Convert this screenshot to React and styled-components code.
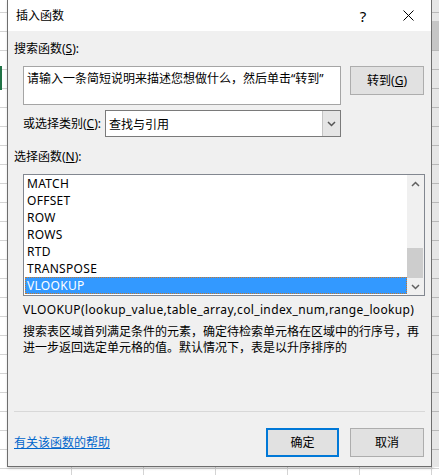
import React from 'react';
import styled, { createGlobalStyle } from 'styled-components';

const GlobalStyle = createGlobalStyle`
  html, body {
    margin: 0;
    padding: 0;
  }
  body {
    width: 439px;
    height: 475px;
    overflow: hidden;
    background-color: #ffffff;
    background-image:
      linear-gradient(to bottom, transparent 18px, #d4d4d4 18px),
      linear-gradient(to right, transparent 71px, #d4d4d4 71px);
    background-size: 100% 19px, 72px 100%;
    background-position: 0 13px, 0 0;
    font-family: "Noto Sans", "Noto Sans CJK SC", sans-serif;
    font-size: 12px;
    color: #000;
  }
`;

const Page = styled.div`
  display: flex;
  height: 467px;
`;

// Excel sheet peeking out at the left edge, with the green cell cursor
const LeftGutter = styled.div`
  width: 7px;
  flex-shrink: 0;
  background: linear-gradient(#217346, #217346) 0 66px / 2px 24px no-repeat;
`;

const RightGutter = styled.div`
  flex: 1;
  background-color: #e6e6e6;
  background-image:
    linear-gradient(#c6c6c6, #c6c6c6),
    linear-gradient(to bottom, transparent 18px, #b8b8b8 18px);
  background-size: 100% 29px, 100% 19px;
  background-position: 0 21px, 0 13px;
  background-repeat: no-repeat, repeat;
`;

const Dialog = styled.div`
  width: 425px;
  height: 467px;
  box-sizing: border-box;
  display: flex;
  flex-direction: column;
  background: #f0f0f0;
  border: 1px solid #6e6e6e;
  border-top: none;
  box-shadow: 1px 1px 3px rgba(0, 0, 0, 0.25);
`;

const TitleBar = styled.div`
  height: 31px;
  display: flex;
  align-items: center;
  background: #ffffff;
  padding-left: 8px;
`;

const Title = styled.div`
  flex: 1;
  font-size: 12px;
  line-height: 17px;
`;

const TitleButton = styled.div`
  width: ${(p) => p.$w}px;
  height: 31px;
  display: flex;
  align-items: center;
  justify-content: center;
  font-size: 15px;
`;

const Body = styled.div`
  flex: 1;
  display: flex;
  flex-direction: column;
`;

const Label = styled.div`
  margin: ${(p) => p.$mt}px 0 0 6px;
  line-height: 17px;
  height: 17px;
`;

const Key = styled.span`
  text-decoration: underline;
`;

const SearchRow = styled.div`
  display: flex;
  align-items: flex-start;
  gap: 9px;
  margin: 9px 0 0 15px;
`;

const SearchBox = styled.div`
  width: 318px;
  height: 39px;
  box-sizing: border-box;
  background: #fff;
  border: 1px solid #a5a5a5;
  padding: 3px 3px;
  line-height: 17px;
`;

const Button = styled.div`
  width: ${(p) => p.$w}px;
  height: 29px;
  box-sizing: border-box;
  display: flex;
  align-items: center;
  justify-content: center;
  background: #e1e1e1;
  border: ${(p) => (p.$default ? '2px solid #0078d7' : '1px solid #adadad')};
  line-height: 17px;
`;

const CategoryRow = styled.div`
  display: flex;
  align-items: center;
  margin: 5px 0 0 15px;
`;

const CategoryLabel = styled.div`
  width: 82px;
  line-height: 17px;
`;

const Select = styled.div`
  width: 236px;
  height: 27px;
  box-sizing: border-box;
  display: flex;
  background: #fff;
  border: 1px solid #7a7a7a;
`;

const SelectValue = styled.div`
  flex: 1;
  display: flex;
  align-items: center;
  padding-left: 3px;
`;

const SelectArrow = styled.div`
  width: 17px;
  display: flex;
  align-items: center;
  justify-content: center;
  background: #e5e5e5;
  border-left: 1px solid #c4c4c4;
`;

const ListBox = styled.div`
  width: 402px;
  height: 122px;
  box-sizing: border-box;
  margin: 9px 0 0 15px;
  display: flex;
  background: #fff;
  border: 1px solid #828790;
`;

const Rows = styled.div`
  flex: 1;
  display: flex;
  flex-direction: column;
  padding-left: 1px;
`;

const Row = styled.div`
  height: 17px;
  box-sizing: border-box;
  padding-left: 1px;
  line-height: 15px;
  letter-spacing: 0.3px;
  color: ${(p) => (p.$selected ? '#fff' : '#000')};
  background: ${(p) => (p.$selected ? '#3399ff' : 'transparent')};
  border: 1px dotted ${(p) => (p.$selected ? '#c8782a' : 'transparent')};
`;

const ScrollBar = styled.div`
  width: 17px;
  display: flex;
  flex-direction: column;
  background: #f0f0f0;
`;

const ScrollArrow = styled.div`
  height: 17px;
  display: flex;
  align-items: center;
  justify-content: center;
`;

const ScrollTrack = styled.div`
  flex: 1;
  display: flex;
  flex-direction: column;
  justify-content: flex-end;
  padding-right: 1px;
`;

const Thumb = styled.div`
  height: 30px;
  background: #cdcdcd;
`;

const Signature = styled.div`
  margin: 5px 0 0 15px;
  line-height: 17px;
  letter-spacing: 0.36px;
  white-space: nowrap;
`;

const Description = styled.div`
  margin: 6px 7px 0 15px;
  line-height: 16px;
`;

const Separator = styled.div`
  margin: auto 6px 0 6px;
  height: 1px;
  background: #d8d8d8;
`;

const Footer = styled.div`
  display: flex;
  align-items: center;
  gap: 11px;
  padding: 16px 7px 9px 6px;
`;

const HelpLink = styled.a`
  flex: 1;
  color: #0066cc;
  text-decoration: underline;
  line-height: 17px;
`;

const Chevron = ({ up, color = '#606060', w = 9 }) => (
  <svg width={w} height="6" viewBox="0 0 9 6">
    <polyline
      points={up ? '1,5 4.5,1.5 8,5' : '1,1 4.5,4.5 8,1'}
      fill="none"
      stroke={color}
      strokeWidth="1.5"
    />
  </svg>
);

const functions = ['MATCH', 'OFFSET', 'ROW', 'ROWS', 'RTD', 'TRANSPOSE', 'VLOOKUP'];

export default function App() {
  return (
    <>
      <GlobalStyle />
      <Page>
        <LeftGutter />
        <Dialog>
          <TitleBar>
            <Title>插入函数</Title>
            <TitleButton $w={46}>?</TitleButton>
            <TitleButton $w={45}>
              <svg width="11" height="11" viewBox="0 0 11 11">
                <path d="M0.5 0.5 L10.5 10.5 M10.5 0.5 L0.5 10.5" stroke="#000" strokeWidth="1" />
              </svg>
            </TitleButton>
          </TitleBar>
          <Body>
            <Label $mt={9}>
              搜索函数(<Key>S</Key>):
            </Label>
            <SearchRow>
              <SearchBox>请输入一条简短说明来描述您想做什么，然后单击“转到”</SearchBox>
              <Button $w={74}>
                转到(<Key>G</Key>)
              </Button>
            </SearchRow>
            <CategoryRow>
              <CategoryLabel>
                或选择类别(<Key>C</Key>):
              </CategoryLabel>
              <Select>
                <SelectValue>查找与引用</SelectValue>
                <SelectArrow>
                  <Chevron color="#555" />
                </SelectArrow>
              </Select>
            </CategoryRow>
            <Label $mt={11}>
              选择函数(<Key>N</Key>):
            </Label>
            <ListBox>
              <Rows>
                {functions.map((f) => (
                  <Row key={f} $selected={f === 'VLOOKUP'}>
                    {f}
                  </Row>
                ))}
              </Rows>
              <ScrollBar>
                <ScrollArrow>
                  <Chevron up />
                </ScrollArrow>
                <ScrollTrack>
                  <Thumb />
                </ScrollTrack>
                <ScrollArrow>
                  <Chevron />
                </ScrollArrow>
              </ScrollBar>
            </ListBox>
            <Signature>VLOOKUP(lookup_value,table_array,col_index_num,range_lookup)</Signature>
            <Description>
              搜索表区域首列满足条件的元素，确定待检索单元格在区域中的行序号，再进一步返回选定单元格的值。默认情况下，表是以升序排序的
            </Description>
            <Separator />
            <Footer>
              <HelpLink href="#">有关该函数的帮助</HelpLink>
              <Button $w={73} $default>
                确定
              </Button>
              <Button $w={74}>取消</Button>
            </Footer>
          </Body>
        </Dialog>
        <RightGutter />
      </Page>
    </>
  );
}
